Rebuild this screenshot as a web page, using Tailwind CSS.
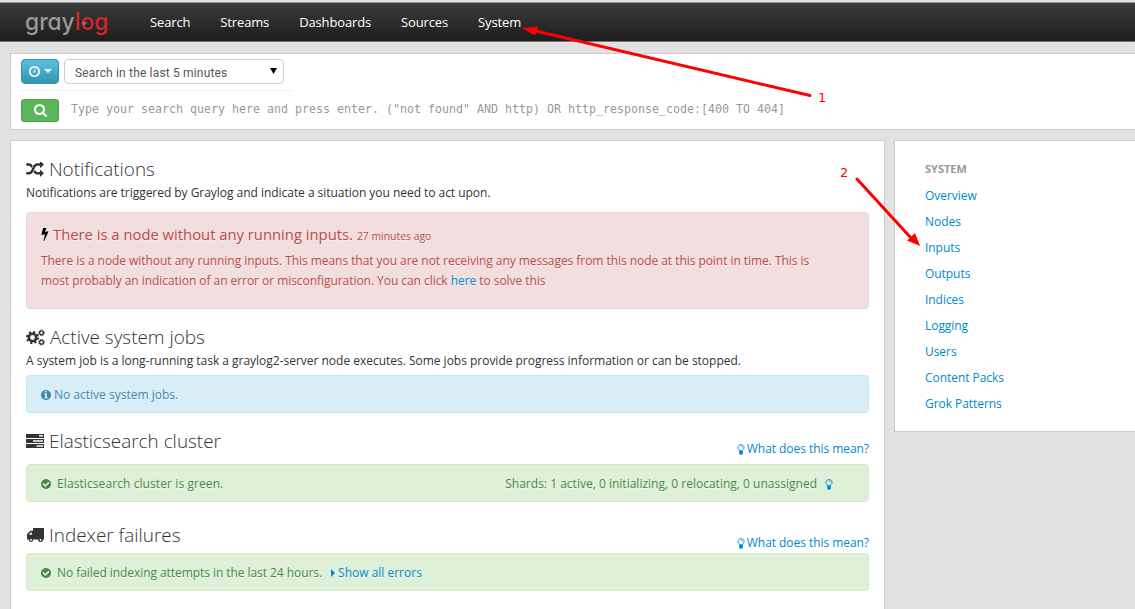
<!DOCTYPE html>
<html lang="en">
<head>
<meta charset="utf-8">
<title>Graylog - System</title>
<script src="https://cdn.jsdelivr.net/npm/@tailwindcss/browser@4"></script>
</head>
<body class="relative h-[609px] w-[1135px] overflow-hidden bg-[#e2e2e2] font-['Open_Sans',sans-serif] text-[12px] leading-5 text-[#333]">
<svg class="hidden">
  <symbol id="check" viewBox="128 128 1536 1536"><path d="M1412 734q0-28-18-46l-91-90q-19-19-45-19t-45 19l-408 407-226-226q-19-19-45-19t-45 19l-91 90q-18 18-18 46 0 27 18 45l362 362q19 19 45 19 27 0 46-19l543-543q18-18 18-45zm252 162q0 209-103 385.5t-279.5 279.5-385.5 103-385.5-103-279.5-279.5-103-385.5 103-385.5 279.5-279.5 385.5-103 385.5 103 279.5 279.5 103 385.5z"/></symbol>
  <symbol id="bulb" viewBox="0 0 8 12"><path d="M2.3 7.2C2.200 6.200 .7 5.500 .7 3.600C.7 1.900 2.200 .7 4 .7S7.300 1.900 7.300 3.600C7.300 5.500 5.800 6.200 5.700 7.200" fill="none" stroke="currentColor" stroke-width="1"/><path d="M2 6.800h4v3.400l-1 1.600H3L2 10.200z"/><path d="M4 2.300q1.500 0 1.700 1.400" fill="none" stroke="currentColor" stroke-width=".7"/></symbol>
</svg>

<header class="mt-0.5 flex h-10 items-center border-t border-[#999] border-b border-b-[#777] bg-linear-to-b from-[#3c3c3c] to-[#1d1d1d] text-[13px] text-white">
  <a class="ml-[25px] flex h-9 w-[95px] shrink-0">
    <svg width="90" height="38" viewBox="0 0 90 38" class="font-['Inter',sans-serif] text-[24px] font-medium [font-feature-settings:'cv11']"><text x="0" y="26" textLength="83.500" lengthAdjust="spacingAndGlyphs" fill="#97999b">gray<tspan fill="#d0252b">log</tspan></text><path d="M57.500 19.500l1-1.500 1 3 1-3 1 1.500" fill="none" stroke="#aaa" stroke-width=".8"/></svg>
  </a>
  <nav class="ml-[30px] flex gap-[30px] tracking-[-0.14px]"><a>Search</a><a>Streams</a><a>Dashboards</a><a>Sources</a><a>System</a></nav>
</header>

<section class="mt-[11px] ml-2.5 h-[77px] border border-r-0 border-[#ccc] bg-white pl-2.5">
  <div class="flex h-[37px] w-[270px] items-start gap-1 border-b border-[#eee] pt-[5px]">
    <button class="flex h-[25px] w-[38px] items-center justify-center gap-1 rounded border border-[#2f96b4] bg-linear-to-b from-[#5bc0de] to-[#2f96b4] text-white">
      <svg class="size-[11px] fill-current" viewBox="128 128 1536 1536"><path d="M1024 544v448q0 14-9 23t-23 9h-320q-14 0-23-9t-9-23v-64q0-14 9-23t23-9h224v-352q0-14 9-23t23-9h64q14 0 23 9t9 23zm416 352q0-148-73-273t-198-198-273-73-273 73-198 198-73 273 73 273 198 198 273 73 273-73 198-198 73-273zm224 0q0 209-103 385.5t-279.5 279.5-385.5 103-385.5-103-279.5-279.5-103-385.5 103-385.5 279.5-279.5 385.5-103 385.5 103 279.5 279.5 103 385.5z"/></svg>
      <svg class="mb-0.5 h-1 w-2 fill-current" viewBox="0 0 8 4"><path d="M0 0h8L4 4z"/></svg>
    </button>
    <div class="ml-px flex h-[25px] w-[220px] items-center justify-between rounded border border-[#ccc] pr-1.5 pl-2.5 font-['Roboto',sans-serif] text-[12px] tracking-[0.17px] text-[#555]"><span class="mt-0.5">Search in the last 5 minutes</span><svg class="mb-0.5 h-1.5 w-[7px] fill-black" viewBox="0 0 7 6"><path d="M0 0h7L3.500 6z"/></svg></div>
  </div>
  <div class="mt-2 flex items-center gap-3">
    <button class="flex h-[23px] w-[38px] items-center justify-center rounded-[3px] border border-[#4a9f4a] bg-[#5bb75b] text-white"><svg class="size-[13px] fill-current" viewBox="64 128 1664 1664"><path d="M1216 832q0-185-131.5-316.5t-316.5-131.5-316.5 131.500-131.500 316.500 131.500 316.500 316.500 131.500 316.500-131.500 131.500-316.500zm512 832q0 52-38 90t-90 38q-54 0-90-38l-343-342q-179 124-399 124-143 0-273.500-55.500t-225-150-150-225-55.500-273.500 55.500-273.500 150-225 225-150 273.500-55.500 273.500 55.500 225 150 150 225 55.500 273.500q0 220-124 399l343 343q37 37 37 90z"/></svg></button>
    <span class="-mt-1 font-['DejaVu_Sans_Mono',monospace] text-[11.640px] whitespace-nowrap text-[#999]">Type your search query here and press enter. ("not found" AND http) OR http_response_code:[400 TO 404]</span>
  </div>
</section>

<div class="mt-2.5 ml-2.5 flex items-start gap-[9px]">
  <main class="h-[480px] w-[875px] shrink-0 border border-[#ccc] bg-white px-[15px] pt-[17px]">
    <h2 class="flex h-[22px] items-center gap-[5px] text-[18.900px] font-light"><svg class="h-[15px] w-[18px] fill-current" viewBox="0 128 1792 1536"><path d="M666 481q-60 92-137 273-22-45-37-72.500t-40.500-63.500-51-56.500-63-35-81.500-14.500h-224q-14 0-23-9t-9-23v-192q0-14 9-23t23-9h224q250 0 410 225zm1126 799q0 14-9 23l-320 320q-9 9-23 9-13 0-22.500-9.500t-9.500-22.500v-192q-32 0-85 .5t-81 1-73-1-71-5-64-10.500-63-18.500-58-28.500-59-40-55-53.500-56-69.500q59-93 136-273 22 45 37 72.500t40.500 63.500 51 56.500 63 35 81.500 14.500h256v-192q0-14 9-23t23-9q12 0 24 10l319 319q9 9 9 23zm0-896q0 14-9 23l-320 320q-9 9-23 9-13 0-22.500-9.500t-9.500-22.500v-192h-256q-48 0-87 15t-69 45-51 61.500-45 77.500q-32 62-78 171-29 66-49.500 111t-54 105-64 100-74 83-90 68.500-106.500 42-128 16.500h-224q-14 0-23-9t-9-23v-192q0-14 9-23t23-9h224q48 0 87-15t69-45 51-61.500 45-77.500q32-62 78-171 29-66 49.500-111t54-105 64-100 74-83 90-68.500 106.500-42 128-16.500h256v-192q0-14 9-23t23-9q12 0 24 10l319 319q9 9 9 23z"/></svg><span>Notifications</span></h2>
    <p class="mt-[3px] tracking-[-0.035px]"><span>Notifications are triggered by Graylog and indicate a situation you need to act upon.</span></p>
    <div class="mt-[9px] h-[97px] rounded border border-[#eed3d7] bg-[#f2dede] px-3.5 pt-[11px] text-[#b94a48] [text-shadow:0_1px_0_rgba(255,255,255,0.5)]">
      <h3 class="flex h-5 items-center text-[14.800px]"><svg class="mr-1 h-[14px] w-2 fill-black" viewBox="448 0 900 1792"><path d="M1333 566q18 20 7 44l-540 1157q-13 25-42 25-4 0-14-2-17-5-25.500-19t-4.500-30l197-808-406 101q-4 1-12 1-18 0-31-11-18-15-13-39l201-825q4-14 16-23t28-9h328q19 0 32 12.500t13 29.500q0 8-5 18l-171 463 396-98q8-2 12-2 19 0 34 15z"/></svg><span>There is a node without any running inputs.</span><small class="mt-1 ml-1 text-[10.400px]">27 minutes ago</small></h3>
      <p class="mt-[7px] whitespace-nowrap tracking-[-0.05px]"><span>There is a node without any running inputs. This means that you are not receiving any messages from this node at this point in time. This is</span><br><span>most probably an indication of an error or misconfiguration. You can click <a class="text-[#08c]">here</a> to solve this</span></p>
    </div>

    <h2 class="mt-[17px] flex h-[22px] items-center gap-[5px] text-[18.900px] font-light"><svg class="h-[17px] w-[19px] fill-none stroke-current" viewBox="0 0 19 17"><circle cx="6.500" cy="8.500" r="3.700" stroke-width="2.600"/><circle cx="6.500" cy="8.500" r="5.600" stroke-width="1.900" stroke-dasharray="2.200 2.198"/><circle cx="15.500" cy="3.800" r="1.900" stroke-width="1.300"/><circle cx="15.500" cy="3.800" r="2.900" stroke-width="1" stroke-dasharray="1.200 1.078"/><circle cx="15.500" cy="13.200" r="1.900" stroke-width="1.300"/><circle cx="15.500" cy="13.200" r="2.900" stroke-width="1" stroke-dasharray="1.200 1.078"/></svg><span>Active system jobs</span></h2>
    <p class="mt-[3px] tracking-[-0.015px]"><span>A system job is a long-running task a graylog2-server node executes. Some jobs provide progress information or can be stopped.</span></p>
    <div class="mt-[4px] flex h-[38px] items-center gap-[3px] rounded border border-[#bce8f1] bg-[#d9edf7] px-3.5 pt-0.5 text-[#3a87ad] [text-shadow:0_1px_0_rgba(255,255,255,0.5)]"><svg class="size-2.5 fill-current" viewBox="128 128 1536 1536"><path d="M1152 1376v-160q0-14-9-23t-23-9h-96v-512q0-14-9-23t-23-9h-320q-14 0-23 9t-9 23v160q0 14 9 23t23 9h96v320h-96q-14 0-23 9t-9 23v160q0 14 9 23t23 9h448q14 0 23-9t9-23zm-128-896v-160q0-14-9-23t-23-9h-192q-14 0-23 9t-9 23v160q0 14 9 23t23 9h192q14 0 23-9t9-23zm640 416q0 209-103 385.500t-279.500 279.500-385.500 103-385.500-103-279.500-279.500-103-385.500 103-385.500 279.500-279.500 385.500-103 385.500 103 279.500 279.500 103 385.500z"/></svg><span>No active system jobs.</span></div>

    <div class="mt-[17px] flex h-[34px] justify-between"><h2 class="flex h-[22px] items-center gap-[5px] text-[18.900px] font-light"><svg class="h-[14px] w-[18px]" viewBox="0 0 18 14"><path fill="currentColor" fill-rule="evenodd" d="M0 0h18v4H0zM0 5h18v4H0zM0 10h18v4H0zM13 1h4v1.500h-4zM7 6.200h10v1.500H7zM10.500 11.200h6.500v1.500h-6.500z"/></svg><span>Elasticsearch cluster</span></h2><a class="mt-[10px] flex h-[18px] items-center gap-0.5 tracking-[-0.05px] text-[#08c]"><svg class="h-[11px] w-2 fill-current"><use href="#bulb"/></svg><span>What does this mean?</span></a></div>
    <div class="flex h-[38px] items-center rounded border border-[#d6e9c6] bg-[#dff0d8] px-3.5 pt-0.5 text-[#468847] [text-shadow:0_1px_0_rgba(255,255,255,0.5)]"><svg class="mr-1.5 size-2.5 fill-current"><use href="#check"/></svg><span class="tracking-[0.09px]">Elasticsearch cluster is green.</span><span class="ml-auto tracking-[0.01px]">Shards: 1 active, 0 initializing, 0 relocating, 0 unassigned</span><svg class="mr-[21px] ml-2 h-[11px] w-2 fill-current text-[#08c]"><use href="#bulb"/></svg></div>

    <div class="mt-[22px] flex h-[29px] justify-between"><h2 class="flex h-[22px] items-center gap-[5px] text-[18.900px] font-light"><svg class="h-[14px] w-[18px]" viewBox="0 0 18 14"><path fill="currentColor" fill-rule="evenodd" d="M7 .5Q7 0 7.500 0H17.500Q18 0 18 .5V11.500H16.800A2.300 2.300 0 1 1 12.300 11.500H7.300A2.300 2.300 0 1 1 2.700 11.500H1V7Q1 6 1.700 5.300L3.800 3.200Q4.300 2.800 5 2.800H7zM2.700 6.800H5.800V4.200H5z"/><circle cx="5" cy="12" r="1.500" fill="#fff" stroke="currentColor"/><circle cx="14.500" cy="12" r="1.500" fill="#fff" stroke="currentColor"/></svg><span>Indexer failures</span></h2><a class="mt-[10px] flex h-[18px] items-center gap-0.5 tracking-[-0.05px] text-[#08c]"><svg class="h-[11px] w-2 fill-current"><use href="#bulb"/></svg><span>What does this mean?</span></a></div>
    <div class="flex h-[38px] items-center rounded border border-[#d6e9c6] bg-[#dff0d8] px-3.5 pt-0.5 text-[#468847] [text-shadow:0_1px_0_rgba(255,255,255,0.5)]"><svg class="mr-1.5 size-2.5 fill-current"><use href="#check"/></svg><span class="tracking-[-0.06px]">No failed indexing attempts in the last 24 hours.</span><svg class="mr-[3px] ml-[9px] h-2 w-1 fill-[#08c]" viewBox="0 0 4 8"><path d="M0 0l4 4-4 4z"/></svg><span class="text-[#08c]">Show all errors</span></div>
  </main>

  <aside class="h-[292px] grow border border-r-0 border-[#ccc] bg-white pt-[15px] pl-[30px] text-[#08c]">
    <h4 class="h-[27px] text-[11px] leading-[26px] font-bold text-[#999]"><span>SYSTEM</span></h4>
    <ul class="leading-[26px] tracking-[-0.05px]"><li>Overview</li><li>Nodes</li><li>Inputs</li><li>Outputs</li><li>Indices</li><li>Logging</li><li>Users</li><li>Content Packs</li><li>Grok Patterns</li></ul>
  </aside>
</div>

<svg class="pointer-events-none absolute inset-0 font-['DejaVu_Sans',sans-serif] text-[13px]" width="1135" height="609" fill="red">
  <path d="M536 31L810 95.500" stroke="red" stroke-width="3" stroke-linecap="round"/><path d="M522 28L538 26.500L535 35.500z"/>
  <path d="M857 179L911 238" stroke="red" stroke-width="3" stroke-linecap="round"/><path d="M920 246L915 233L907 240.500z"/>
  <text x="818" y="102">1</text><text x="840" y="177">2</text>
</svg>
</body>
</html>
